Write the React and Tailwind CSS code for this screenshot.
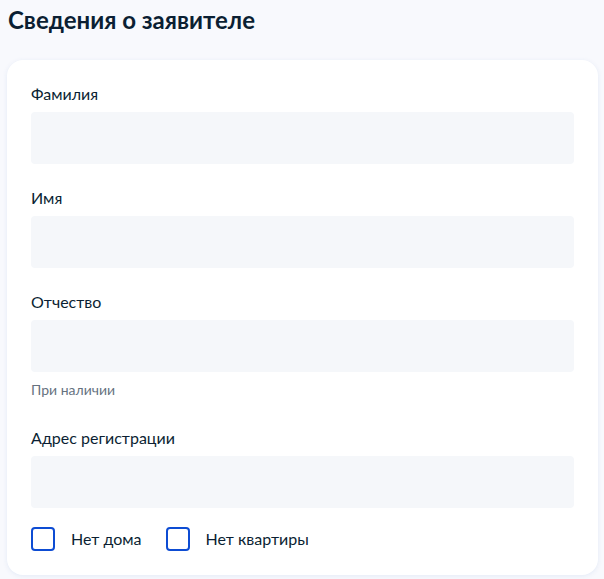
export default function App() {
  const fields = [
    { label: 'Фамилия' },
    { label: 'Имя' },
    { label: 'Отчество', hint: 'При наличии' },
    { label: 'Адрес регистрации' },
  ];

  return (
    <div className="min-h-[579px] bg-[#f8f9fd] pl-[7px] pr-[6px] pt-[6px] pb-[4px] font-['Lato',sans-serif] text-[#0b1f33]">
      <h2 className="ml-px text-[24px] font-bold leading-[28px]">Сведения о заявителе</h2>

      <div className="mt-[26px] rounded-2xl bg-white px-6 pt-6 pb-6 shadow-[0_1px_4px_rgba(225,232,245,0.9)]">
        {fields.map((f, i) => (
          <div key={f.label} className={i === 0 ? '' : f.label === 'Адрес регистрации' ? 'mt-[30px]' : 'mt-6'}>
            <label className="block text-[16px] leading-5">{f.label}</label>
            <div className="mt-2 h-[52px] rounded bg-[#f5f7fa]" />
            {f.hint && <p className="mt-[10px] text-[14px] leading-4 text-[#66727f]">{f.hint}</p>}
          </div>
        ))}

        <div className="mt-[19px] flex items-center">
          <label className="flex items-center">
            <span className="h-6 w-6 rounded border-2 border-[#0d4cd3]" />
            <span className="ml-4 text-[16px]">Нет дома</span>
          </label>
          <label className="ml-6 flex items-center">
            <span className="h-6 w-6 rounded border-2 border-[#0d4cd3]" />
            <span className="ml-4 text-[16px]">Нет квартиры</span>
          </label>
        </div>
      </div>
    </div>
  );
}
